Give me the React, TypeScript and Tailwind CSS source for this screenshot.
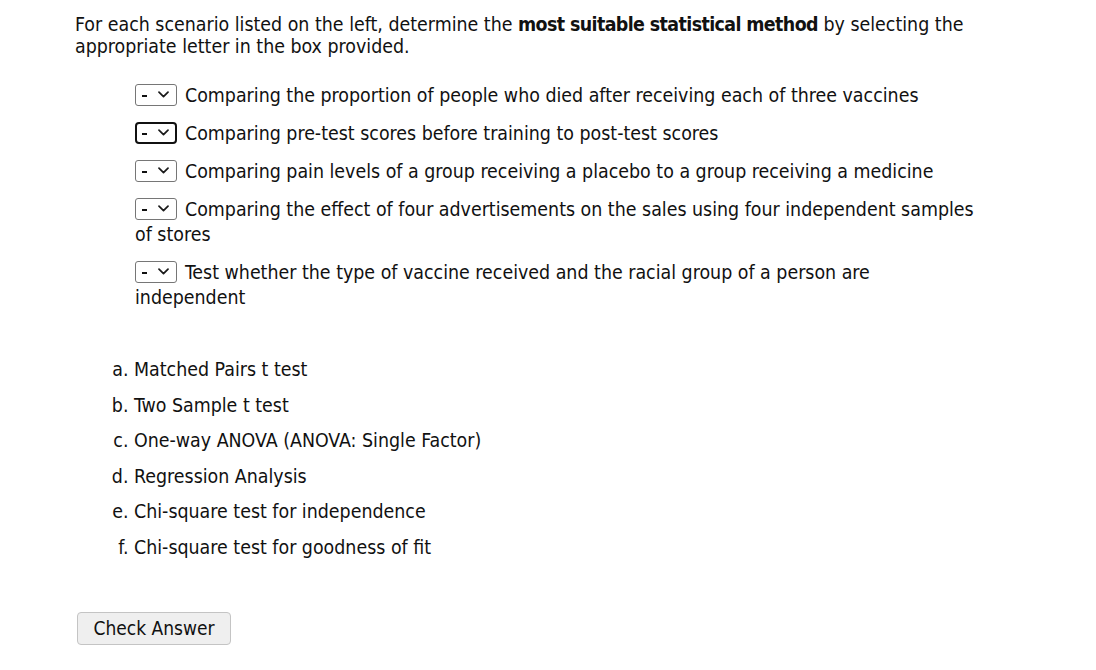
import React from 'react';

const scenarios = [
  'Comparing the proportion of people who died after receiving each of three vaccines',
  'Comparing pre-test scores before training to post-test scores',
  'Comparing pain levels of a group receiving a placebo to a group receiving a medicine',
  'Comparing the effect of four advertisements on the sales using four independent samples of stores',
  'Test whether the type of vaccine received and the racial group of a person are independent',
];

const methods = [
  'Matched Pairs t test',
  'Two Sample t test',
  'One-way ANOVA (ANOVA: Single Factor)',
  'Regression Analysis',
  'Chi-square test for independence',
  'Chi-square test for goodness of fit',
];

const Picker: React.FC<{ focused?: boolean }> = ({ focused }) => (
  <span
    className={
      'inline-flex items-center justify-between align-middle relative -top-[2px] w-[42px] h-[22px] mr-[8px] bg-white ' +
      (focused ? 'border-2 border-[#111111] rounded-[4px] pl-[5px] pr-[6px]' : 'border border-[#767676] rounded-[3px] pl-[6px] pr-[7px]')
    }
  >
    <span className="block w-[5px] h-[2px] bg-[#111111] mt-[2px]" />
    <svg width="11" height="7" viewBox="0 0 11 7" fill="none">
      <path d="M1 1.2 L5.5 5.6 L10 1.2" stroke="#1a1a1a" strokeWidth="1.7" strokeLinecap="round" strokeLinejoin="round" />
    </svg>
  </span>
);

export default function App() {
  return (
    <div
      className="pl-[75px] pt-[14px] text-[19.4px] leading-[22px] text-[#111111] bg-white min-h-[670px]"
      style={{ fontFamily: '"DejaVu Sans Condensed", "Noto Sans", sans-serif' }}
    >
      <p className="w-[925px]">
        For each scenario listed on the left, determine the <b className="font-bold tracking-[-0.6px]">most suitable statistical method</b> by selecting the appropriate letter in the box provided.
      </p>

      <div className="mt-[25px] ml-[60px] w-[843px]">
        {scenarios.map((s, i) => (
          <div key={i} className="leading-[25px] mb-[13px]">
            <Picker focused={i === 1} />
            {s}
          </div>
        ))}
      </div>

      <ol className="list-[lower-alpha] pl-[59px] mt-[42px]">
        {methods.map(m => (
          <li key={m} className="leading-[35.6px]">{m}</li>
        ))}
      </ol>

      <button className="mt-[46px] ml-[2px] w-[154px] h-[33px] border border-[#c4c4c4] rounded-[4px] bg-[#efefef] text-[19px] text-[#111111]">
        Check Answer
      </button>
    </div>
  );
}
